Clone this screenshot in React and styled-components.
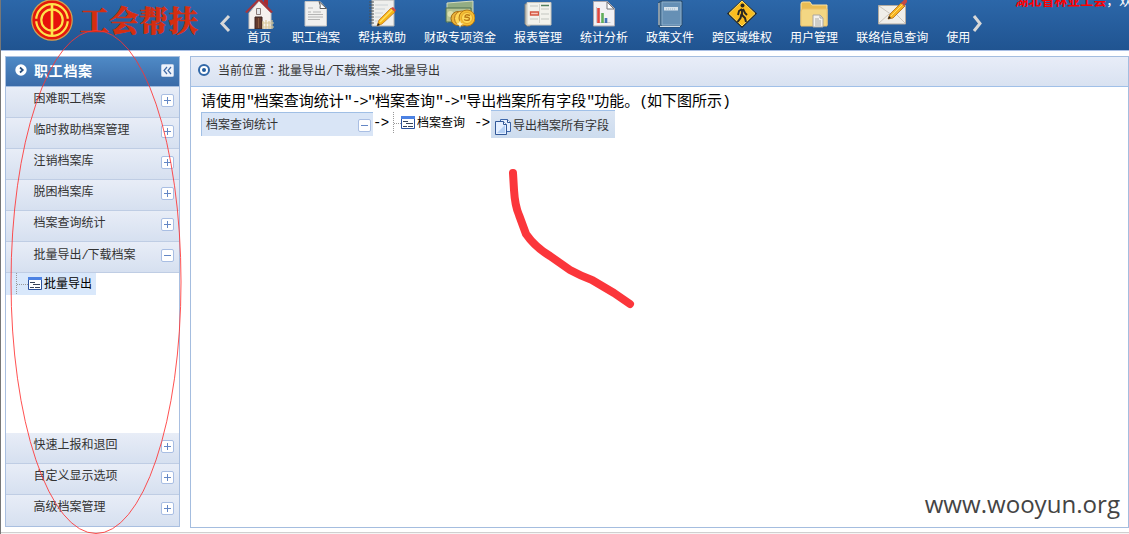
import React from 'react';
import styled, { createGlobalStyle, css } from 'styled-components';

const cjk = '"Liberation Sans", "Noto Sans CJK SC", sans-serif';

const Global = createGlobalStyle`
  * { box-sizing: border-box; }
  body { margin: 0; background: #fff; overflow: hidden; font: 12px/16px ${cjk}; color: #333; }
  svg { display: block; flex: none; }
`;

const Page = styled.div`
  position: relative;
  width: 1129px;
  height: 534px;
  overflow: hidden;
  border-left: 1px solid #777;
`;

const Header = styled.header`
  display: flex;
  align-items: flex-start;
  height: 51px;
  overflow: hidden;
  background: linear-gradient(#2c67a9, #205491);
  border-bottom: 1px solid #a9bfe4;
  > * { flex: none; }
`;

const Logo = styled.div`
  padding-left: 30px;
  width: 79px;
`;

const Brand = styled.div`
  width: 138px;
  color: #d52e10;
  font: 900 29px/39px "Noto Serif CJK SC", "Noto Sans CJK SC", serif;
  letter-spacing: 0.6px;
  -webkit-text-stroke: 0.7px #d52e10;
  white-space: nowrap;
`;

const Arrow = styled.div`
  width: 14px;
  padding: 14px 0 0 1px;
`;

const Nav = styled.nav`
  display: flex;
  gap: 18px;
  margin-left: 12px;
`;

const NavItem = styled.a`
  display: flex;
  flex: none;
  flex-direction: column;
  align-items: center;
  height: 50px;
  color: #fff;
  white-space: nowrap;
`;

const IconSlot = styled.span`
  display: block;
  width: ${(p) => (p.$empty ? 24 : 30)}px;
  height: 29px;
`;

const NavLabel = styled.span`
  margin: 0.5px 1px 0 0;
  margin-right: 0;
  line-height: 17px;
`;

const Welcome = styled.div`
  display: flex;
  margin: -7px 0 0 31px;
  color: #fff;
  font-size: 13px;
  line-height: 16px;
  white-space: nowrap;
  b { color: #f00; }
`;

const Centered = styled.span`
  font-family: "Noto Sans CJK TC", sans-serif;
  line-height: 1;
`;

const Body = styled.div`
  display: flex;
  gap: 10px;
  height: 476px;
  padding: 5px 0 0 4px;
`;

const Sidebar = styled.aside`
  display: flex;
  flex: none;
  flex-direction: column;
  width: 175px;
  height: 471px;
  border: 1px solid #a9bfe0;
  border-bottom-width: 2px;
`;

const SideTitle = styled.div`
  display: flex;
  align-items: center;
  flex: none;
  height: 30px;
  padding: 0 5px 2px 9px;
  background: linear-gradient(#4f8ac6, #3a6ba8);
  border-bottom: 1px solid #a4bddf;
  color: #fff;
  font-size: 14px;
  font-weight: bold;
  span { flex: 1; margin-left: 7px; letter-spacing: 0.7px; }
`;

const Section = styled.div`
  display: flex;
  align-items: flex-start;
  justify-content: space-between;
  flex: none;
  height: 31px;
  padding: 4px 5px 0 27.5px;
  background: linear-gradient(#e8edf7, #d6e0f0);
  border-bottom: 1px solid #bfcde4;
  &:last-child { border-bottom: 0; }
  > span { padding-top: ${(p) => (p.$low ? 1 : 0)}px; }
`;

const Toggle = styled.i`
  flex: none;
  width: 13px;
  height: 13px;
  margin-top: ${(p) => p.$top || 3}px;
  border: 1px solid #a9bee3;
  border-radius: 2px;
  background:
    linear-gradient(#6487c5, #6487c5) center / 7px 1px no-repeat,
    ${(p) => !p.$open && css`linear-gradient(#6487c5, #6487c5) center / 1px 7px no-repeat,`}
    #fff;
`;

const Tree = styled.div`
  flex: none;
  height: 160px;
  background: #fff;
`;

const TreeItem = styled.div`
  display: flex;
  align-items: center;
  width: 90px;
  height: 22px;
  padding: 0 0 1px 10px;
  background: #d9e8fb;
  color: #000;
  white-space: nowrap;
  span { margin-left: 2px; }
`;

const Main = styled.main`
  flex: none;
  width: 939px;
  height: 472px;
  border: 1px solid #a4bddf;
`;

const Crumbs = styled.div`
  display: flex;
  align-items: center;
  height: 30px;
  padding: 0 7px 2px;
  background: linear-gradient(#e8edf8, #d9e2f1);
  border-bottom: 1px solid #a0c0e8;
  > span { margin-left: 7px; white-space: nowrap; }
`;

const Content = styled.div`
  padding: 4px 10px;
  color: #000;
`;

const Instruction = styled.p`
  margin: 0;
  height: 20px;
  font-size: 15px;
  line-height: 20px;
  white-space: nowrap;
`;

const monoSizes = {
  body: css`font-size: 15px; letter-spacing: -1.2px;`,
  step: css`font-size: 14px; letter-spacing: -0.6px;`,
  label: css`font-size: 12px; letter-spacing: -1.2px;`,
};

const Mono = styled.span`
  font-family: "Liberation Mono", monospace;
  line-height: 1;
  ${(p) => monoSizes[p.$size || 'body']}
`;

const Steps = styled.div`
  display: flex;
  align-items: flex-start;
  height: 30px;
  white-space: nowrap;
`;

const Step = styled.div`
  display: flex;
  justify-content: space-between;
  width: 172px;
  height: 24px;
  margin-top: 1px;
  padding: 4px 2px 0 4px;
  background: #d9e5f6;
  border: solid #a0bfe5;
  border-width: 1px 0 0 1px;
  color: #333;
`;

const StepArrow = styled.div`
  width: ${(p) => p.$width}px;
  padding: 4px 0 0 ${(p) => p.$indent || 0}px;
`;

const Query = styled.div`
  display: flex;
  align-items: center;
  width: 74px;
  height: 24px;
  span { margin-left: 2px; }
`;

const Export = styled.div`
  display: flex;
  align-items: center;
  width: 124px;
  height: 28px;
  margin-top: -1px;
  padding: 3px 0 0 4px;
  background: linear-gradient(#dbe5f3, #cddcee);
  border-top: 1px solid #a0c0e8;
  color: #333;
  span { margin-left: 1px; }
`;

const StatusLine = styled.div`
  height: 7px;
  margin-top: 5px;
  border-top: 1px solid #d0d0d0;
  background: #f5f5f5;
`;

const Watermark = styled.div`
  position: absolute;
  right: 9px;
  top: 487px;
  color: #444;
  font: 24.1px/34px "Open Sans", "Noto Sans", sans-serif;
`;

const Marks = styled.svg`
  position: absolute;
  left: -1px;
  top: 0;
  pointer-events: none;
`;

const icons = {
  home: (
    <>
      <path d="M5 13V29H27V13L15 1Z" fill="#f6f2ee" stroke="#cac2bd" />
      <path d="M20 0h4v6l-4-3Z" fill="#a92b30" />
      <path d="M1 12 13 0h5L29 12l-2 1L15 1 3 13Z" fill="#a8343a" />
      <path d="M12.500 8.500h4v6h-4Z" fill="#e5e8eb" stroke="#8b7d79" />
      <path d="M11 17h7v12h-7Z" fill="#633a2d" stroke="#3c2520" />
      <path d="M14.500 18v10" stroke="#8a5b40" />
      <path d="M19 21v8M22 20v9M25 21v8M28 20v9M18 23h12M18 27h12" stroke="#d7c799" strokeWidth="1.2" />
    </>
  ),
  doc: (
    <>
      <path d="M4 1.500h15l6.500 7V26H4Z" fill="#f0f0ef" stroke="#c5c5c5" />
      <path d="M18 1.500q2 4 1 7h6.500Z" fill="#fff" stroke="#5d5d5d" />
      <path d="M7 8h5M7 12h3M12 12h8M7 14.500h15M7 17h15M7 19.500h12" stroke="#b4b4b4" />
    </>
  ),
  note: (
    <>
      <path d="M5 0h22v26H5Z" fill="#efefed" stroke="#b3b3b1" />
      <path d="M8 5h13M8 9h10M8 13h8M8 17h6M8 21h8" stroke="#c9d0d4" />
      <path d="M2 2h5M2 5h5M2 8h5M2 11h5M2 14h5M2 17h5M2 20h5M2 23h5" stroke="#4b5055" />
      <path d="m10 26 2-6L24 8l4 4-13 12Z" fill="#f7b515" stroke="#bb6c12" strokeWidth=".7" />
      <path d="m13 22 12-12" stroke="#ffe168" strokeWidth="1.4" />
      <path d="m24 8 2-1 3 3-1 2Z" fill="#d34b42" />
      <path d="m10 26 1-3 2 2Z" fill="#222" />
    </>
  ),
  money: (
    <>
      <path d="m2 3 26-2v14L2 22Z" fill="#93ad83" stroke="#d3dcc0" />
      <path d="M1 8h25v14H1Z" fill="#b6c494" stroke="#496c50" />
      <circle cx="5.500" cy="14" r="3" fill="#dce0ae" />
      <circle cx="13" cy="18.500" r="7" fill="#eab33a" stroke="#a06c13" />
      <circle cx="17" cy="18.500" r="7.500" fill="#ffd655" stroke="#b9761d" />
      <circle cx="22" cy="18" r="8" fill="#f6be33" stroke="#b47815" />
      <circle cx="22" cy="18" r="5.500" fill="#ffda59" stroke="#e2a52a" />
      <path d="M25 15.500q-5-2-5 1.500 6 0 4 3-3 1-5-.5" fill="none" stroke="#b97714" strokeWidth="1.4" />
      <path d="m15 20 1 3 3 1-3 1-1 3-1-3-3-1 3-1Z" fill="#fff4ba" />
    </>
  ),
  report: (
    <>
      <path d="M2 4h5v22H4l-2-2Z" fill="#c9c6ba" stroke="#85847e" />
      <path d="M4 2.500h24V25H4Z" fill="#f2f2ec" stroke="#cac8bf" />
      <path d="M7 6h8M18 9h8M18 14h8M7 19h8M18 19h8" stroke="#c3c6c0" />
      <path d="M18 5.500h8" stroke="#527d5d" strokeWidth="1.5" />
      <path d="M7.500 12h8v3h-8Z" fill="#f7c7bd" stroke="#d4553f" strokeWidth="1.3" />
      <path d="M16.500 4v19" stroke="#d4d4ce" />
    </>
  ),
  chart: (
    <>
      <path d="M4.500 1.500h14l7 7V26h-21Z" fill="#f2f1f4" stroke="#aaa7ad" />
      <path d="M18 2v7h7Z" fill="#fff" stroke="#75747b" />
      <path d="M7.500 7v15.500h14" fill="none" stroke="#c8c7cd" />
      <path d="M9.500 8v15" stroke="#e0463d" strokeWidth="2.6" />
      <path d="M13.500 13v10" stroke="#60ae5b" strokeWidth="2.6" />
      <path d="M17 18v5" stroke="#4572b5" strokeWidth="2.6" />
    </>
  ),
  book: (
    <>
      <path d="M3.500 2.500 6 1h21v24l-2 2H4Z" fill="#436b8e" stroke="#294b6b" />
      <path d="M7 2h19v23H7Z" fill="#6690b5" stroke="#8caecb" />
      <path d="M4 3v22" stroke="#8a9ba8" strokeWidth="2" />
      <path d="M9 7h14v3.500H9Z" fill="#d7e3ec" />
      <path d="M11 9h10" stroke="#a1b7c8" strokeDasharray="1 1" />
      <path d="M5 26.500h20" stroke="#d4dde3" />
    </>
  ),
  walk: (
    <>
      <path d="m15 0 15 13.500L15 28 0 13.500Z" fill="#29271f" />
      <path d="m15 1 13 12.500L15 26 2 13.500Z" fill="#f9bd20" stroke="#ffe168" />
      <circle cx="15.500" cy="5.500" r="2" fill="#282722" />
      <path d="m15 9-3 2-1 4M16 9l2 4 2 2M15 9v6" fill="none" stroke="#282722" strokeWidth="1.9" />
      <path d="m14.500 14-1 4-3 4M15 15l3 3 1 4" fill="none" stroke="#282722" strokeWidth="2" />
    </>
  ),
  folder: (
    <>
      <path d="M2 4q0-2 2-2h7l2 3h15v20H2Z" fill="#e9bc54" stroke="#ffe2a0" />
      <path d="M4 9h24v17H2V12q0-3 2-3Z" fill="#f3d683" stroke="#efc36a" />
      <path d="M14 15h7l3 3v9H14Z" fill="#f3f1ed" stroke="#aaa69f" />
      <path d="M21 15v3h3M16 19h4M16 21h6M16 23h6M16 25h6" stroke="#aaa9a4" fill="none" />
    </>
  ),
  mail: (
    <>
      <path d="M1.500 5.500h27V24h-27Z" fill="#f0eee9" stroke="#b2aba1" />
      <path d="m2 6 13 9L28 6M2 23l10-9M28 23l-9-9" fill="none" stroke="#cbc5bd" />
      <path d="m11 19 2-5L24 3l4 3-12 12Z" fill="#f7b321" stroke="#ad6b1b" strokeWidth=".8" />
      <path d="m14 16 12-12" stroke="#ffde71" />
      <path d="m24 3 3-3h3v2l-3 4Z" fill="#c44a43" />
      <path d="m11 19 1-3 2 2Z" fill="#222" />
    </>
  ),
};

const navItems = [
  ['首页', 'home'],
  ['职工档案', 'doc'],
  ['帮扶救助', 'note'],
  ['财政专项资金', 'money'],
  ['报表管理', 'report'],
  ['统计分析', 'chart'],
  ['政策文件', 'book'],
  ['跨区域维权', 'walk'],
  ['用户管理', 'folder'],
  ['联络信息查询', 'mail'],
  ['使用', null],
];

const upper = ['困难职工档案', '临时救助档案管理', '注销档案库', '脱困档案库', '档案查询统计'];
const lower = ['快速上报和退回', '自定义显示选项', '高级档案管理'];

const Emblem = () => (
  <svg width="44" height="42" viewBox="0 0 44 42">
    <circle cx="21" cy="20" r="20.2" fill="#e4180c" stroke="#d3a550" strokeWidth="1.2" />
    <circle cx="21" cy="20" r="15.800" fill="none" stroke="#ffe34b" strokeWidth="2.2" />
    <circle cx="21" cy="20" r="10.700" fill="#e7130b" stroke="#ffe34b" strokeWidth="2.2" />
    <path d="M4 20h5M33 20h5" stroke="#e4180c" strokeWidth="2.5" />
    <path d="M21 4v32" stroke="#ffe34b" strokeWidth="2.6" />
  </svg>
);

const Chevron = ({ right }) => (
  <svg width="12" height="20" viewBox="0 0 12 20">
    <path d={right ? 'm3 2 6 7.500-6 7.500' : 'm10 2-7 7.500 7 7.500'} fill="none" stroke="#d8d8d8" strokeWidth="3" />
  </svg>
);

const TreeLeaf = ({ compact }) => {
  const offset = compact ? 4 : 0;
  return (
    <svg width={26 - offset} height="22" viewBox={`0 0 ${26 - offset} 22`}>
      <path d={`M.5 0v22M1 11.500h${11 - offset}`} stroke="#999" strokeDasharray="1 1" />
      <g transform={`translate(${-offset})`}>
        <path d="M12.500 4.500h13v12h-13Z" fill="#fff" stroke="#2c519d" />
        <path d="M12 4h14v3H12Z" fill="#4c82e3" />
        <path d="M14 9.500h5M17 11.500h7M14 14.500h4M19 14.500h5" stroke="#37445a" />
      </g>
    </svg>
  );
};

const Copy = () => (
  <svg width="17" height="17" viewBox="0 0 17 17">
    <path d="M5.500 1.500h7l3 3v9h-10Z" fill="#e4efff" stroke="#3c66aa" />
    <path d="M.5 3.500h8l3 3v10H.5Z" fill="#e4efff" stroke="#315898" />
    <path d="M8.500 3.500v3h3M12.500 1.500v3h3" fill="#fff" stroke="#315898" />
    <path d="m2 15 8-8v8Z" fill="#b4d0f5" />
  </svg>
);

export default function App() {
  return (
    <Page>
      <Global />
      <Header>
        <Logo><Emblem /></Logo>
        <Brand>工会帮扶</Brand>
        <Arrow><Chevron /></Arrow>
        <Nav>
          {navItems.map(([label, icon]) => (
            <NavItem key={label}>
              <IconSlot $empty={!icon}>
                {icon && <svg width="30" height="29" viewBox="0 0 30 29">{icons[icon]}</svg>}
              </IconSlot>
              <NavLabel>{label}</NavLabel>
            </NavItem>
          ))}
        </Nav>
        <Arrow><Chevron right /></Arrow>
        <Welcome><b>湖北省林业工会</b><span>，欢</span></Welcome>
      </Header>

      <Body>
        <Sidebar>
          <SideTitle>
            <svg width="12" height="14" viewBox="0 0 12 14">
              <circle cx="6" cy="6" r="5.700" fill="#fff" />
              <path d="m5 3.500 2.800 2.500L5 8.500" fill="none" stroke="#244b7c" strokeWidth="1.7" />
            </svg>
            <span>职工档案</span>
            <svg width="13" height="13" viewBox="0 0 13 13">
              <rect x=".5" y=".5" width="12" height="12" rx="1" fill="#eef3fb" stroke="#c3d1e8" />
              <path d="M6 3 3 6.500 6 10M10 3 7 6.500l3 3.500" fill="none" stroke="#426ba7" strokeWidth="1.2" />
            </svg>
          </SideTitle>
          {upper.map((name) => (
            <Section key={name}><span>{name}</span><Toggle /></Section>
          ))}
          <Section $low><span>批量导出<Mono $size="label">/</Mono>下载档案</span><Toggle $open /></Section>
          <Tree>
            <TreeItem><TreeLeaf /><span>批量导出</span></TreeItem>
          </Tree>
          {lower.map((name) => (
            <Section key={name}><span>{name}</span><Toggle /></Section>
          ))}
        </Sidebar>

        <Main>
          <Crumbs>
            <svg width="13" height="14" viewBox="0 0 13 14">
              <circle cx="6" cy="6" r="5" fill="#fff" stroke="#3268a8" strokeWidth="2" />
              <circle cx="6" cy="6" r="2" fill="#225d9f" />
            </svg>
            <span>
              当前位置<Centered lang="zh-TW">：</Centered>批量导出<Mono $size="label">/</Mono>下载档案
              <Mono $size="label">-&gt;</Mono>批量导出
            </span>
          </Crumbs>
          <Content>
            <Instruction>
              请使用<Mono>"</Mono>档案查询统计<Mono>"-&gt;"</Mono>档案查询<Mono>"-&gt;"</Mono>
              导出档案所有字段<Mono>"</Mono>功能。<Mono>(</Mono>如下图所示<Mono>)</Mono>
            </Instruction>
            <Steps>
              <Step>档案查询统计<Toggle $open $top={2} /></Step>
              <StepArrow $width={20}><Mono $size="step">-&gt;</Mono></StepArrow>
              <Query><TreeLeaf compact /><span>档案查询</span></Query>
              <StepArrow $width={24} $indent={7}><Mono $size="step">-&gt;</Mono></StepArrow>
              <Export><Copy /><span>导出档案所有字段</span></Export>
            </Steps>
          </Content>
        </Main>
      </Body>
      <StatusLine />

      <Watermark>www.wooyun.org</Watermark>
      <Marks width="1129" height="534" viewBox="0 0 1129 534" fill="none">
        <ellipse cx="96" cy="282" rx="85" ry="251.500" stroke="#f33" strokeOpacity=".85" />
        <path d="M513 173 514 190Q515 206 519 215L526 234Q535 247 550 256L570 270Q581 276 592 280L614 293 630 304" stroke="#fb363b" strokeWidth="8" strokeLinecap="round" strokeLinejoin="round" />
      </Marks>
    </Page>
  );
}
